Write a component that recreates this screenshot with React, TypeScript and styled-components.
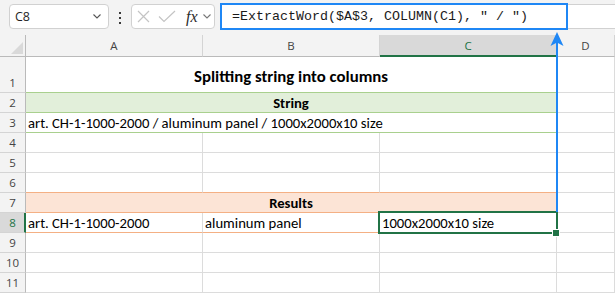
import React from "react";
import styled, { createGlobalStyle } from "styled-components";

const GlobalStyle = createGlobalStyle`
  html, body { margin: 0; padding: 0; background: #fff; overflow: hidden; }
  #root { width: 615px; height: 293px; }
`;

const GRID = "#dcdcdc";
const HEAD_LINE = "#bababa";
const HEAD_BG = "#f3f3f3";
const GREEN_BORDER = "#a9d08e";
const GREEN_FILL = "#e2efda";
const ORANGE_BORDER = "#f4b084";
const ORANGE_FILL = "#fce4d6";
const EXCEL_GREEN = "#217346";
const BLUE = "#1f87f5";
const COLS = "26px 177px 177px 177px 1fr";
const UI_FONT = `"Open Sans", "Noto Sans", sans-serif`;
const CELL_FONT = `Carlito, Calibri, "Liberation Sans", Arial, sans-serif`;

const Page = styled.div`
  position: relative;
  width: 615px;
  height: 293px;
  overflow: hidden;
  background: #fff;
`;

const Toolbar = styled.div`
  display: flex;
  align-items: flex-start;
  height: 35px;
  box-sizing: border-box;
  padding: 4px 0 0 9px;
  background: ${HEAD_BG};
`;

const NameBox = styled.div`
  width: 100px;
  height: 25px;
  box-sizing: border-box;
  border: 1px solid #d1d1d1;
  border-radius: 4px;
  background: #fff;
  display: flex;
  align-items: center;
  justify-content: space-between;
  padding: 0 7px 0 5px;
  font-family: ${UI_FONT};
  font-size: 12.5px;
  color: #1f1f1f;
`;

const Kebab = styled.div`
  width: 22px;
  display: flex;
  flex-direction: column;
  align-items: center;
  gap: 3px;
  padding-top: 8px;
`;

const Dot = styled.span`
  width: 2px;
  height: 2px;
  background: #3a3a3a;
`;

const FxBox = styled.div`
  width: 84px;
  height: 25px;
  box-sizing: border-box;
  border: 1px solid #d1d1d1;
  border-radius: 4px;
  background: #fff;
  display: flex;
  align-items: center;
  padding-left: 5px;
`;

const Fx = styled.span`
  font-family: "Liberation Serif", "Times New Roman", serif;
  font-style: italic;
  font-size: 16px;
  color: #2b2b2b;
  margin-left: 10px;
  margin-right: 5px;
  line-height: 1;
`;

const FormulaBar = styled.div`
  position: relative;
  flex: 1;
  height: 25px;
  margin-left: 5px;
  box-sizing: border-box;
  border: 1px solid #d1d1d1;
  border-right: none;
  background: #fff;
  display: flex;
  align-items: center;
  padding-left: 11px;
  font-family: "Liberation Mono", "DejaVu Sans Mono", monospace;
  font-size: 13.33px;
  color: #1a1a1a;
  white-space: pre;
`;

const Highlight = styled.div`
  position: absolute;
  left: -1px;
  top: -2px;
  width: 348px;
  height: 27px;
  box-sizing: border-box;
  border: 2px solid ${BLUE};
`;

const Row = styled.div<{ $h: number }>`
  display: grid;
  grid-template-columns: ${COLS};
  height: ${(p) => p.$h}px;
`;

const Corner = styled.div`
  position: relative;
  box-sizing: border-box;
  background: ${HEAD_BG};
  border-right: 1px solid ${HEAD_LINE};
  border-bottom: 1px solid ${HEAD_LINE};
  &::after {
    content: "";
    position: absolute;
    right: 2px;
    bottom: 2px;
    width: 12px;
    height: 12px;
    background: #d9d9d9;
    clip-path: polygon(100% 0, 100% 100%, 0 100%);
  }
`;

const ColHead = styled.div<{ $active?: boolean }>`
  box-sizing: border-box;
  background: ${(p) => (p.$active ? "#d9d9d9" : HEAD_BG)};
  border-right: 1px solid #d4d4d4;
  border-bottom: ${(p) => (p.$active ? `2px solid ${EXCEL_GREEN}` : `1px solid ${HEAD_LINE}`)};
  display: flex;
  align-items: center;
  justify-content: center;
  padding-top: ${(p) => (p.$active ? 1 : 0)}px;
  font-family: ${UI_FONT};
  font-size: 11.5px;
  color: ${(p) => (p.$active ? EXCEL_GREEN : "#444")};
`;

const RowHead = styled.div<{ $active?: boolean }>`
  box-sizing: border-box;
  background: ${(p) => (p.$active ? "#d9d9d9" : HEAD_BG)};
  border-right: ${(p) => (p.$active ? `2px solid ${EXCEL_GREEN}` : `1px solid ${HEAD_LINE}`)};
  border-bottom: 1px solid #d4d4d4;
  display: flex;
  align-items: flex-end;
  justify-content: center;
  padding: 0 0 1px ${(p) => (p.$active ? 1 : 0)}px;
  font-family: ${UI_FONT};
  font-size: 11.5px;
  line-height: 17px;
  color: ${(p) => (p.$active ? EXCEL_GREEN : "#444")};
`;

const Cell = styled.div<{
  $span?: number;
  $bb?: string;
  $fill?: string;
  $center?: boolean;
  $bold?: boolean;
  $pb?: number;
  $size?: number;
}>`
  position: relative;
  grid-column: span ${(p) => p.$span ?? 1};
  box-sizing: border-box;
  border-right: 1px solid ${GRID};
  border-bottom: 1px solid ${(p) => p.$bb ?? GRID};
  background: ${(p) => p.$fill ?? "#fff"};
  display: flex;
  align-items: flex-end;
  justify-content: ${(p) => (p.$center ? "center" : "flex-start")};
  padding: 0 2px ${(p) => p.$pb ?? 0}px;
  font-family: ${CELL_FONT};
  font-size: ${(p) => p.$size ?? 14.67}px;
  line-height: 18px;
  font-weight: ${(p) => (p.$bold ? 700 : 400)};
  color: #000;
  white-space: nowrap;
`;

const Selection = styled.div`
  position: absolute;
  left: -2px;
  top: -2px;
  width: 180px;
  height: 23px;
  box-sizing: border-box;
  border: 2px solid ${EXCEL_GREEN};
  z-index: 2;
`;

const FillHandle = styled.div`
  position: absolute;
  left: 172px;
  top: 16px;
  width: 8px;
  height: 8px;
  box-sizing: border-box;
  border: 1px solid #fff;
  background: ${EXCEL_GREEN};
  z-index: 3;
`;

const Arrow = styled.svg`
  position: absolute;
  left: 549px;
  top: 30px;
  z-index: 5;
`;

const Chevron = ({ color = "#555" }: { color?: string }) => (
  <svg width="8" height="5" viewBox="0 0 8 5">
    <polyline points="0.5,0.5 4,4 7.5,0.5" fill="none" stroke={color} strokeWidth="1.1" />
  </svg>
);

type CellSpec = {
  text?: string;
  span?: number;
  bb?: string;
  fill?: string;
  center?: boolean;
  bold?: boolean;
  pb?: number;
  size?: number;
  selected?: boolean;
};
type RowSpec = { n: number; h: number; cells: CellSpec[]; active?: boolean };

const rows: RowSpec[] = [
  {
    n: 1,
    h: 36,
    cells: [
      { text: "Splitting string into columns", span: 3, bb: GREEN_BORDER, center: true, bold: true, pb: 6, size: 16.8 },
      {},
    ],
  },
  { n: 2, h: 20, cells: [{ text: "String", span: 3, bb: GREEN_BORDER, fill: GREEN_FILL, center: true, bold: true }, {}] },
  { n: 3, h: 20, cells: [{ text: "art. CH-1-1000-2000 / aluminum panel / 1000x2000x10 size", span: 3, bb: GREEN_BORDER }, {}] },
  { n: 4, h: 20, cells: [{}, {}, {}, {}] },
  { n: 5, h: 20, cells: [{}, {}, {}, {}] },
  { n: 6, h: 20, cells: [{ bb: ORANGE_BORDER }, { bb: ORANGE_BORDER }, { bb: ORANGE_BORDER }, {}] },
  { n: 7, h: 20, cells: [{ text: "Results", span: 3, bb: ORANGE_BORDER, fill: ORANGE_FILL, center: true, bold: true }, {}] },
  {
    n: 8,
    h: 20,
    active: true,
    cells: [
      { text: "art. CH-1-1000-2000", bb: ORANGE_BORDER },
      { text: "aluminum panel", bb: ORANGE_BORDER },
      { text: "1000x2000x10 size", selected: true },
      {},
    ],
  },
  { n: 9, h: 20, cells: [{}, {}, {}, {}] },
  { n: 10, h: 20, cells: [{}, {}, {}, {}] },
  { n: 11, h: 20, cells: [{}, {}, {}, {}] },
];

export default function App() {
  return (
    <Page>
      <GlobalStyle />
      <Toolbar>
        <NameBox>
          <span>C8</span>
          <Chevron />
        </NameBox>
        <Kebab>
          <Dot />
          <Dot />
          <Dot />
        </Kebab>
        <FxBox>
          <svg width="13" height="13" viewBox="0 0 13 13">
            <path d="M1 1 L12 12 M12 1 L1 12" stroke="#c4c4c4" strokeWidth="1.2" fill="none" />
          </svg>
          <svg width="18" height="13" viewBox="0 0 18 13" style={{ marginLeft: 8 }}>
            <polyline points="1,6.5 6,11.5 17,1" stroke="#c4c4c4" strokeWidth="1.2" fill="none" />
          </svg>
          <Fx>fx</Fx>
          <Chevron color="#777" />
        </FxBox>
        <FormulaBar>
          {`=ExtractWord($A$3, COLUMN(C1), " / ")`}
          <Highlight />
        </FormulaBar>
      </Toolbar>

      <Row $h={22}>
        <Corner />
        <ColHead>A</ColHead>
        <ColHead>B</ColHead>
        <ColHead $active>C</ColHead>
        <ColHead>D</ColHead>
      </Row>

      {rows.map((r) => (
        <Row key={r.n} $h={r.h}>
          <RowHead $active={r.active}>{r.n}</RowHead>
          {r.cells.map((c, i) => (
            <Cell
              key={i}
              $span={c.span}
              $bb={c.bb}
              $fill={c.fill}
              $center={c.center}
              $bold={c.bold}
              $pb={c.pb}
              $size={c.size}
            >
              {c.text}
              {c.selected && (
                <>
                  <Selection />
                  <FillHandle />
                </>
              )}
            </Cell>
          ))}
        </Row>
      ))}

      <Arrow width="16" height="183" viewBox="0 0 16 183">
        <line x1="8" y1="12" x2="8" y2="182" stroke={BLUE} strokeWidth="2" />
        <path d="M8 2 L14.5 16 L8 12.5 L1.5 16 Z" fill={BLUE} />
      </Arrow>
    </Page>
  );
}
